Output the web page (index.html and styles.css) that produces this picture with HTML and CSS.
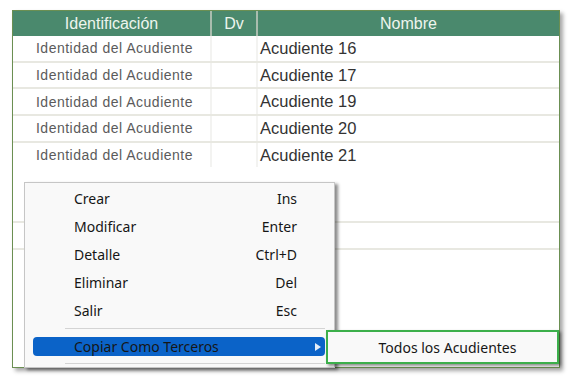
FILE: index.html
```html
<!DOCTYPE html>
<html lang="es">
<head>
    <meta charset="UTF-8">
    <title>Acudientes</title>
    <link rel="stylesheet" href="styles.css">
</head>
<body>
    <div class="grid-frame">
        <div class="grid-head">
            <div class="cell">Identificación</div>
            <div class="cell">Dv</div>
            <div class="cell">Nombre</div>
        </div>
        <div class="grid-body">
            <div class="row"><div class="cell ident">Identidad del Acudiente</div><div class="cell"></div><div class="cell name">Acudiente 16</div></div>
            <div class="row"><div class="cell ident">Identidad del Acudiente</div><div class="cell"></div><div class="cell name">Acudiente 17</div></div>
            <div class="row"><div class="cell ident">Identidad del Acudiente</div><div class="cell"></div><div class="cell name">Acudiente 19</div></div>
            <div class="row"><div class="cell ident">Identidad del Acudiente</div><div class="cell"></div><div class="cell name">Acudiente 20</div></div>
            <div class="row last"><div class="cell ident">Identidad del Acudiente</div><div class="cell"></div><div class="cell name">Acudiente 21</div></div>
            <div class="row empty"></div>
            <div class="row empty lined"></div>
            <div class="row empty lined"></div>
        </div>
    </div>

    <!-- menu contextual -->
    <div class="ctx-menu">
        <div class="item"><span>Crear</span><span>Ins</span></div>
        <div class="item"><span>Modificar</span><span>Enter</span></div>
        <div class="item"><span>Detalle</span><span>Ctrl+D</span></div>
        <div class="item"><span>Eliminar</span><span>Del</span></div>
        <div class="item"><span>Salir</span><span>Esc</span></div>
        <div class="sep"></div>
        <div class="item active">
            <span>Copiar Como Terceros</span>
            <svg class="arrow" width="6" height="8" viewBox="0 0 6 8"><path d="M0 0 L6 4 L0 8 Z" fill="#e4edf8"/></svg>
        </div>
        <div class="sep"></div>
    </div>

    <div class="sub-menu">Todos los Acudientes</div>
</body>
</html>
```

FILE: styles.css
```css
* {
    margin: 0;
    padding: 0;
    box-sizing: border-box;
}

body {
    background: #fff;
    padding: 10px 0 0 12px;
    font-family: 'Liberation Sans', Arial, sans-serif;
    position: relative;
    width: 570px;
    height: 379px;
    overflow: hidden;
}

.grid-frame {
    width: 548px;
    height: 358px;
    border: 1px solid #6b8f52;
    box-shadow: 3px 3px 4px rgba(0, 0, 0, 0.35);
    overflow: hidden;
    background: #fff;
}

.grid-head,
.row {
    display: grid;
    grid-template-columns: 199px 46px 1fr;
}

.grid-head {
    height: 25px;
    background: #4a896d;
    color: #eef5ee;
    font-size: 16px;
}

.grid-head .cell {
    display: flex;
    align-items: center;
    justify-content: center;
    border-right: 2px solid #a9bdae;
}

.grid-head .cell:last-child {
    border-right: none;
}

.row {
    height: 26.7px;
    border-bottom: 2px solid #e8e8e1;
}

.row.last,
.row.empty {
    border-bottom-color: transparent;
}

.row.empty.lined {
    border-bottom-color: #e8e8e1;
}

.row .cell {
    display: flex;
    align-items: center;
    border-right: 2px solid #f3f3f1;
}

.row .cell:last-child {
    border-right: none;
}

.ident {
    justify-content: center;
    padding-left: 6px;
    font-size: 14px;
    color: #5b5b5b;
    letter-spacing: 0.5px;
}

.name {
    padding-left: 2px;
    font-size: 16.5px;
    color: #333;
}

.ctx-menu {
    position: absolute;
    left: 24px;
    top: 182px;
    width: 311px;
    height: 186px;
    padding-top: 1px;
    background: #f9f9f9;
    border: 1px solid #c6c6c6;
    box-shadow: 3px 2px 3px rgba(0, 0, 0, 0.45);
    font-family: 'Noto Sans', 'Open Sans', sans-serif;
    font-size: 14px;
    color: #161616;
}

.item {
    height: 28px;
    display: flex;
    align-items: center;
    justify-content: space-between;
    padding: 0 37px 0 49px;
}

.sep {
    height: 1px;
    background: #d4d4d4;
    margin: 4px 9px 0 40px;
}

.item.active {
    height: 19px;
    margin: 8px 9px 7px 8px;
    padding: 0 4px 0 41px;
    background: #0b63c8;
    border-radius: 4px;
    line-height: 19px;
}

.arrow {
    display: block;
}

.sub-menu {
    position: absolute;
    left: 326px;
    top: 330px;
    width: 233px;
    height: 34px;
    padding-left: 10px;
    background: #f9f9f9;
    border: 2px solid #3caf4b;
    box-shadow: 2px 2px 3px rgba(0, 0, 0, 0.45);
    display: flex;
    align-items: center;
    justify-content: center;
    font-family: 'Noto Sans', 'Open Sans', sans-serif;
    font-size: 14px;
    color: #161616;
}
```
